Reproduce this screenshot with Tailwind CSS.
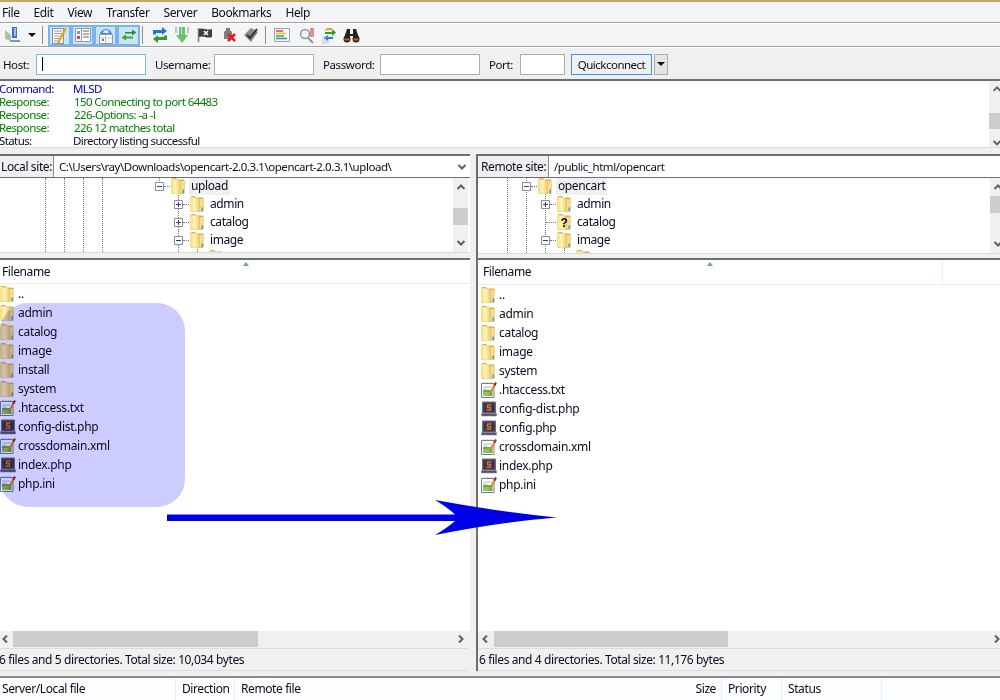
<!DOCTYPE html>
<html lang="en">
<head>
    <meta charset="UTF-8">
    <title>FileZilla</title>
    <script src="https://cdn.jsdelivr.net/npm/@tailwindcss/browser@4"></script>
</head>
<body class="bg-[#f0f0f0]">
<svg width="0" height="0" class="absolute">
    <defs>
        <linearGradient id="flap" x1="0" y1="0" x2="1" y2="0"><stop offset="0" stop-color="#f7dc80"/><stop offset=".5" stop-color="#fff4bc"/><stop offset="1" stop-color="#f2cf68"/></linearGradient>
        <symbol id="folder" viewBox="0 0 14 16">
            <path d="M1 0h4l1 1.500h6.500a1 1 0 0 1 1 1V15a1 1 0 0 1-1 1H1z" fill="#d9b14c"/>
            <path d="M0 .5 9 2.500V16L0 15.500z" fill="url(#flap)"/>
            <path d="M9.500 3h3.500v12.500H9.500z" fill="#f5dc8e"/>
            <path d="M11.500 11.500h1.500v3.500h-1.500z" fill="#3f9fe0"/>
        </symbol>
        <symbol id="txt" viewBox="0 0 16 16">
            <path d="M.5 1.500h12.500v14H.5z" fill="#fff" stroke="#6f7f8f"/>
            <path d="M2 1h9" stroke="#8a8a8a" stroke-dasharray="1 1"/>
            <path d="M2.500 5h8M2.500 7h4" stroke="#b5bcc4"/>
            <path d="M2 8h9.500v6H2z" fill="#5fae4a"/>
            <path d="M2 10h7v4H2z" fill="#8dc95f"/>
            <path d="M8 13 14.500 1.500" stroke="#d98b1f" stroke-width="2"/>
            <path d="M13.500 3.500 15 .5" stroke="#a8202a" stroke-width="2"/>
        </symbol>
        <symbol id="php" viewBox="0 0 16 16">
            <path d="M1.500 1h13v11h-13z" fill="#47475c" stroke="#6a6a80"/>
            <path d="M3 2.500h10v8H3z" fill="#34344a"/>
            <path d="M10.500 4H6.500v2.500h3V9h-4" fill="none" stroke="#e0702a" stroke-width="1.400"/>
            <path d="M.5 12.500h15V15H.5z" fill="#55556a" stroke="#8888a0" stroke-width=".6"/>
        </symbol>
        <symbol id="chev-up" viewBox="0 0 10 8"><path d="M1.500 6 5 2.500 8.500 6" fill="none" stroke="#606060" stroke-width="2"/></symbol>
        <symbol id="chev-down" viewBox="0 0 10 8"><path d="M1.500 2 5 5.500 8.500 2" fill="none" stroke="#606060" stroke-width="2"/></symbol>
        <symbol id="chev-left" viewBox="0 0 8 10"><path d="M6 1.500 2.500 5 6 8.500" fill="none" stroke="#606060" stroke-width="2"/></symbol>
        <symbol id="chev-right" viewBox="0 0 8 10"><path d="M2 1.500 5.500 5 2 8.500" fill="none" stroke="#606060" stroke-width="2"/></symbol>
        <symbol id="plus" viewBox="0 0 9 9"><path d="M.5.500h8v8h-8z" fill="#fff" stroke="#8a8f98"/><path d="M2 4.500h5M4.500 2v5" stroke="#2b3f7a"/></symbol>
        <symbol id="minus" viewBox="0 0 9 9"><path d="M.5.500h8v8h-8z" fill="#fff" stroke="#8a8f98"/><path d="M2 4.500h5" stroke="#2b3f7a"/></symbol>
    </defs>
</svg>

<div class="relative w-[1000px] h-[700px] overflow-hidden flex flex-col text-[12px] leading-none text-[#0b0b22] font-['Noto_Sans',sans-serif] tracking-[-0.4px]">
    <div class="h-[2px] shrink-0 bg-[#c9a45f]"></div>

    <!-- menu -->
    <div class="h-[21px] shrink-0 bg-[#f4f5f7] flex items-center gap-[14px] pl-[2px] pt-px border-b border-[#a3a3a3]">
        <span>File</span><span>Edit</span><span>View</span><span>Transfer</span><span>Server</span><span>Bookmarks</span><span>Help</span>
    </div>

    <!-- toolbar -->
    <div class="h-[24px] shrink-0 bg-[#f4f5f7] border-t border-white border-b border-b-[#a3a3a3] flex items-center">
        <svg class="ml-[5px] w-[16px] h-[18px]" viewBox="0 0 16 18"><path d="M0 4 6 9v6L0 13z" fill="#a9c79a"/><path d="M7 1h5v11H7z" fill="#3f74c4"/><path d="M9 2h2v8H9z" fill="#9cc0ea"/><path d="M5 14h10v2H5z" fill="#8793a3"/></svg>
        <span class="ml-[7px] w-0 h-0 border-x-[4px] border-x-transparent border-t-[4px] border-t-[#111]"></span>
        <span class="ml-[6px] w-px h-[18px] bg-[#8f8f8f]"></span>
        <div class="ml-[5px] flex">
            <span class="w-[23px] h-[21px] bg-[#cce4f7] border-2 border-[#7ab4ee] flex items-center justify-center">
                <svg class="w-[16px] h-[17px] shrink-0" viewBox="0 0 16 17"><path d="M.5 1.500h11v15H.5z" fill="#fff" stroke="#8c8c8c"/><path d="M2 4h8M2 6.500h8M2 9h7M2 11.500h6M2 14h4" stroke="#9a9a9a"/><path d="M6 16 14 1" stroke="#e3a21f" stroke-width="2.200"/></svg>
            </span>
            <span class="w-[23px] h-[21px] bg-[#cce4f7] border-2 border-[#7ab4ee] flex items-center justify-center">
                <svg class="w-[16px] h-[14px] shrink-0" viewBox="0 0 16 14"><path d="M.5.500h15v13H.5z" fill="#fff" stroke="#8f9aa8"/><path d="M6.500 1v12" stroke="#8f9aa8"/><path d="M2 3h3v3H2z" fill="#8a94c4"/><path d="M2 8h3v3H2z" fill="#d9434f"/><path d="M8 3h6M8 6h6M8 9h6" stroke="#8f9aa8" stroke-width="1.500"/></svg>
            </span>
            <span class="w-[23px] h-[21px] bg-[#cce4f7] border-2 border-[#7ab4ee] flex items-center justify-center">
                <svg class="w-[16px] h-[17px] shrink-0" viewBox="0 0 16 17"><path d="M2 8a6 6 0 0 1 12 0z" fill="#3f8ad8"/><path d="M5 6a3 3 0 0 1 6 0z" fill="#dcefff"/><path d="M1.500 7.500h13v9h-13z" fill="#fff" stroke="#8f9aa8"/><path d="M7.500 8v8M2 11h12" stroke="#b8c0ca"/><path d="M4 12h2v2H4z" fill="#d9434f"/></svg>
            </span>
            <span class="w-[23px] h-[21px] bg-[#cce4f7] border-2 border-[#7ab4ee] flex items-center justify-center">
                <svg class="w-[16px] h-[14px] shrink-0" viewBox="0 0 16 14"><path d="M4 4h7V1.500L15.500 4.500 11 7.500V5.500H4z" fill="#2e8b2e"/><path d="M12 8.500H5V6.500L.5 9.500 5 12.500V10.500h7z" fill="#35a835"/></svg>
            </span>
        </div>
        <span class="ml-[2px] w-px h-[18px] bg-[#8f8f8f]"></span>
        <svg class="ml-[9px] w-[16px] h-[16px]" viewBox="0 0 16 16"><path d="M1 7.500V3h9V0l5 4-5 4V6H4v1.500z" fill="#1f78d1"/><path d="M15 8.500V13H6v3l-5-4 5-4v2h6V8.500z" fill="#2ba02b"/></svg>
        <svg class="ml-[6px] w-[16px] h-[18px]" viewBox="0 0 16 18"><path d="M1 1h2v6H1zM13 1h2v6h-2z" fill="#b5c4d2"/><path d="M5 1h6v8h3l-6 8-6-8h3z" fill="#6cc06c"/><path d="M7 1h1v8H7z" fill="#bfe6bf"/></svg>
        <svg class="ml-[7px] w-[16px] h-[16px]" viewBox="0 0 16 16"><path d="M1.500 1v14" stroke="#777" stroke-width="1.500"/><path d="M2 2c4-2 8 2 13 0v8c-5 2-9-2-13 0z" fill="#3d3d3d"/><path d="M7 4l4 4M11 4 7 8" stroke="#fff" stroke-width="1.500"/></svg>
        <svg class="ml-[8px] w-[16px] h-[16px]" viewBox="0 0 16 16"><path d="M5 1h4v2l2 2v7H3V5l2-2z" fill="#7d7d7d"/><path d="M7 7l7 7M14 7l-7 7" stroke="#e31b1b" stroke-width="2.500"/></svg>
        <svg class="ml-[6px] w-[16px] h-[16px]" viewBox="0 0 16 16"><path d="M1 8 8 1l7 4-7 10z" fill="#8a8a8a"/><path d="M4 8l3 3 7-9" fill="none" stroke="#333" stroke-width="2"/></svg>
        <span class="ml-[6px] w-px h-[18px] bg-[#8f8f8f]"></span>
        <svg class="ml-[8px] w-[16px] h-[14px]" viewBox="0 0 16 14"><path d="M.5.500h15v13H.5z" fill="#f5f5f5" stroke="#9aa2ac"/><path d="M2 3h7" stroke="#e04040" stroke-width="1.500"/><path d="M2 5.500h10" stroke="#e8c020" stroke-width="1.500"/><path d="M2 8h8" stroke="#40a040" stroke-width="1.500"/><path d="M2 10.500h11" stroke="#4080d0" stroke-width="1.500"/></svg>
        <svg class="ml-[8px] w-[17px] h-[17px]" viewBox="0 0 17 17"><path d="M12 1h4v9h-4z" fill="#e98a8a"/><circle cx="7" cy="7" r="4.500" fill="#e8f1fa" stroke="#8a97a5" stroke-width="1.500"/><path d="M10 11l5 5" stroke="#8a97a5" stroke-width="2"/></svg>
        <svg class="ml-[6px] w-[16px] h-[17px]" viewBox="0 0 16 17"><path d="M1 9h7v8H1z" fill="#cfe1f5"/><path d="M4 5h7V2l4 3.500L11 9V7H4z" fill="#2ca02c"/><path d="M3 4l3-3h5v2H6z" fill="#e6a020"/><path d="M12 10H7v-2L3 11l4 3v-2h5z" fill="#3080d0"/></svg>
        <svg class="ml-[6px] w-[17px] h-[15px]" viewBox="0 0 17 15"><path d="M4 1h3v5h3V1h3l3 9H10V8H7v2H1z" fill="#222"/><circle cx="4" cy="11" r="3.500" fill="#222"/><circle cx="13" cy="11" r="3.500" fill="#222"/><path d="M1.500 11.500h5M10.500 11.500h5" stroke="#f0501e" stroke-width="2"/></svg>
    </div>

    <!-- quickconnect -->
    <div class="h-[34px] shrink-0 bg-[#f0f0f0] border-t border-white border-b-2 border-b-[#6e6e6e] flex items-center pt-px text-[11.500px]">
        <span class="ml-[3px] w-[33px] pt-px shrink-0">Host:</span>
        <div class="w-[110px] h-[21px] shrink-0 bg-white border border-[#7eb4ea] flex items-center pl-[5px]"><span class="w-px h-[14px] bg-black"></span></div>
        <span class="ml-[9px] w-[59px] pt-px shrink-0">Username:</span>
        <div class="w-[100px] h-[21px] shrink-0 bg-white border border-[#acacac]"></div>
        <span class="ml-[9px] w-[57px] pt-px shrink-0">Password:</span>
        <div class="w-[100px] h-[21px] shrink-0 bg-white border border-[#acacac]"></div>
        <span class="ml-[9px] w-[31px] pt-px shrink-0">Port:</span>
        <div class="w-[45px] h-[21px] shrink-0 bg-white border border-[#acacac]"></div>
        <div class="ml-[6px] w-[81px] h-[21px] pt-px shrink-0 bg-[#f0f0f0] border border-[#3399ff] flex items-center justify-center tracking-[-0.5px]">Quickconnect</div>
        <div class="ml-[2px] w-[14px] h-[21px] shrink-0 bg-[#e4e4e4] border border-[#acacac] flex items-start justify-center pt-[7px]"><span class="w-0 h-0 border-x-[4px] border-x-transparent border-t-[4px] border-t-[#111]"></span></div>
    </div>

    <!-- message log -->
    <div class="h-[67px] shrink-0 bg-white flex border-b border-[#dcdcdc]">
        <div class="w-[990px] shrink-0 pt-px -ml-px grid grid-cols-[74px_1fr] auto-rows-[13px] items-center text-[11.500px] tracking-[-0.6px]">
            <span class="text-[#0000a8]">Command:</span><span class="text-[#0000a8]">MLSD</span>
            <span class="text-[#008000]">Response:</span><span class="text-[#008000] pl-px">150 Connecting to port 64483</span>
            <span class="text-[#008000]">Response:</span><span class="text-[#008000] pl-px">226-Options: -a -l</span>
            <span class="text-[#008000]">Response:</span><span class="text-[#008000] pl-px">226 12 matches total</span>
            <span>Status:</span><span>Directory listing successful</span>
        </div>
        <div class="w-[16px] shrink-0 bg-[#f0f0f0] flex flex-col items-center relative">
            <svg class="mt-[4px] w-[10px] h-[8px]"><use href="#chev-up"/></svg>
            <div class="mt-[20px] w-full h-[17px] bg-[#cdcdcd]"></div>
            <svg class="mt-[10px] w-[10px] h-[8px]"><use href="#chev-down"/></svg>
        </div>
    </div>

    <div class="h-[6px] shrink-0 bg-[#f0f0f0]"></div>

    <!-- local and remote panes -->
    <div class="flex h-[517px] shrink-0">
        <section class="w-[470px] flex flex-col border-t-2 border-[#6e6e6e]">
            <div class="h-[22px] shrink-0 bg-white flex items-center border-b border-[#6e6e6e] whitespace-nowrap">
                <div class="w-[54px] h-full bg-[#f0f0f0] border-r border-[#8a8a8a] flex items-center pl-px pt-px">Local site:</div>
                <span class="ml-[5px] flex-1 pt-px text-[11.500px] tracking-[-0.45px]">C:\Users\ray\Downloads\opencart-2.0.3.1\opencart-2.0.3.1\upload\</span>
                <svg class="mr-[3px] w-[10px] h-[8px]"><use href="#chev-down"/></svg>
            </div>
            <div class="relative h-[74px] shrink-0 bg-white overflow-hidden flex">
                <span class="absolute left-[45px] top-0 h-full border-l border-dotted border-[#777]"></span>
                <span class="absolute left-[64px] top-0 h-full border-l border-dotted border-[#777]"></span>
                <span class="absolute left-[83px] top-0 h-full border-l border-dotted border-[#777]"></span>
                <span class="absolute left-[102px] top-0 h-full border-l border-dotted border-[#777]"></span>
                <span class="absolute left-[159px] top-0 h-[5px] border-l border-dotted border-[#777]"></span>
                <span class="absolute left-[178px] top-[13px] h-[61px] border-l border-dotted border-[#777]"></span>
                <span class="absolute left-[197px] top-[68px] h-[6px] border-l border-dotted border-[#777]"></span>
                <div class="relative flex-1 -mt-px">
                    <div class="h-[18px] flex items-center pl-[155px]"><svg class="w-[9px] h-[9px]"><use href="#minus"/></svg><span class="w-[6px] border-t border-dotted border-[#777]"></span><svg class="ml-px w-[14px] h-[16px]"><use href="#folder"/></svg><span class="ml-[4px] h-[18px] px-[2px] bg-[#f0f0f0] flex items-center">upload</span></div>
                    <div class="h-[18px] flex items-center pl-[174px]"><svg class="w-[9px] h-[9px]"><use href="#plus"/></svg><span class="w-[6px] border-t border-dotted border-[#777]"></span><svg class="ml-px w-[14px] h-[16px]"><use href="#folder"/></svg><span class="ml-[6px]">admin</span></div>
                    <div class="h-[18px] flex items-center pl-[174px]"><svg class="w-[9px] h-[9px]"><use href="#plus"/></svg><span class="w-[6px] border-t border-dotted border-[#777]"></span><svg class="ml-px w-[14px] h-[16px]"><use href="#folder"/></svg><span class="ml-[6px]">catalog</span></div>
                    <div class="h-[18px] flex items-center pl-[174px]"><svg class="w-[9px] h-[9px]"><use href="#minus"/></svg><span class="w-[6px] border-t border-dotted border-[#777]"></span><svg class="ml-px w-[14px] h-[16px]"><use href="#folder"/></svg><span class="ml-[6px]">image</span></div>
                    <div class="h-[18px] flex items-center pl-[209px]"><svg class="w-[14px] h-[16px]"><use href="#folder"/></svg></div>
                </div>
                <div class="w-[15px] mr-[2px] shrink-0 bg-[#f0f0f0] flex flex-col items-center">
                    <svg class="mt-[5px] w-[10px] h-[8px]"><use href="#chev-up"/></svg>
                    <div class="mt-[17px] w-full h-[17px] bg-[#cdcdcd]"></div>
                    <svg class="mt-[14px] w-[10px] h-[8px]"><use href="#chev-down"/></svg>
                </div>
            </div>
            <div class="h-[6px] shrink-0 bg-[#f0f0f0] border-t border-[#dcdcdc]"></div>
            <div class="h-[2px] shrink-0 bg-[#6e6e6e]"></div>
            <div class="relative h-[24px] shrink-0 bg-white border-b border-[#e4eff9] flex items-center pl-[2px]">Filename
                <span class="absolute left-[243px] top-[2px] w-0 h-0 border-x-[3px] border-x-transparent border-b-[4px] border-b-[#6a9fcf]"></span>
            </div>
            <div class="h-[347px] shrink-0 bg-white flex flex-col tracking-[-0.3px]">
                <div class="h-[19px] flex items-center"><svg class="w-[14px] h-[16px]"><use href="#folder"/></svg><span class="ml-[4px]">..</span></div>
                <div class="h-[19px] flex items-center"><svg class="w-[14px] h-[16px]"><use href="#folder"/></svg><span class="ml-[4px]">admin</span></div>
                <div class="h-[19px] flex items-center"><svg class="w-[14px] h-[16px]"><use href="#folder"/></svg><span class="ml-[4px]">catalog</span></div>
                <div class="h-[19px] flex items-center"><svg class="w-[14px] h-[16px]"><use href="#folder"/></svg><span class="ml-[4px]">image</span></div>
                <div class="h-[19px] flex items-center"><svg class="w-[14px] h-[16px]"><use href="#folder"/></svg><span class="ml-[4px]">install</span></div>
                <div class="h-[19px] flex items-center"><svg class="w-[14px] h-[16px]"><use href="#folder"/></svg><span class="ml-[4px]">system</span></div>
                <div class="h-[19px] flex items-center"><svg class="w-[16px] h-[16px]"><use href="#txt"/></svg><span class="ml-[2px]">.htaccess.txt</span></div>
                <div class="h-[19px] flex items-center"><svg class="w-[16px] h-[16px]"><use href="#php"/></svg><span class="ml-[2px]">config-dist.php</span></div>
                <div class="h-[19px] flex items-center"><svg class="w-[16px] h-[16px]"><use href="#txt"/></svg><span class="ml-[2px]">crossdomain.xml</span></div>
                <div class="h-[19px] flex items-center"><svg class="w-[16px] h-[16px]"><use href="#php"/></svg><span class="ml-[2px]">index.php</span></div>
                <div class="h-[19px] flex items-center"><svg class="w-[16px] h-[16px]"><use href="#txt"/></svg><span class="ml-[2px]">php.ini</span></div>
            </div>
            <div class="h-[16px] shrink-0 mr-[2px] bg-[#f0f0f0] flex items-center">
                <svg class="ml-px w-[8px] h-[10px]"><use href="#chev-left"/></svg>
                <div class="ml-[4px] w-[245px] h-full bg-[#cdcdcd]"></div>
                <svg class="ml-auto mr-[3px] w-[8px] h-[10px]"><use href="#chev-right"/></svg>
            </div>
            <div class="mr-[2px] mt-px h-[23px] shrink-0 bg-[#f0f0f0] border-y border-[#dcdcdc] flex items-center -ml-px">6 files and 5 directories. Total size: 10,034 bytes</div>
        </section>

        <section class="ml-[6px] w-[524px] flex flex-col border-t-2 border-l-2 border-[#6e6e6e] bg-[#f0f0f0]">
            <div class="h-[22px] shrink-0 bg-white flex items-center border-b border-[#6e6e6e] whitespace-nowrap">
                <div class="w-[71px] h-full bg-[#f0f0f0] border-r border-[#8a8a8a] flex items-center pl-[3px] pt-px">Remote site:</div>
                <span class="ml-[5px] flex-1 pt-px text-[11.500px] tracking-[-0.45px]">/public_html/opencart</span>
            </div>
            <div class="relative h-[75px] shrink-0 bg-white overflow-hidden flex">
                <span class="absolute left-[29px] top-0 h-full border-l border-dotted border-[#777]"></span>
                <span class="absolute left-[48px] top-0 h-full border-l border-dotted border-[#777]"></span>
                <span class="absolute left-[67px] top-[13px] h-[62px] border-l border-dotted border-[#777]"></span>
                <span class="absolute left-[86px] top-[69px] h-[6px] border-l border-dotted border-[#777]"></span>
                <div class="relative flex-1 -mt-px">
                    <div class="h-[18px] flex items-center pl-[44px]"><svg class="w-[9px] h-[9px]"><use href="#minus"/></svg><span class="w-[6px] border-t border-dotted border-[#777]"></span><svg class="ml-px w-[14px] h-[16px]"><use href="#folder"/></svg><span class="ml-[4px] h-[18px] px-[2px] bg-[#f0f0f0] flex items-center">opencart</span></div>
                    <div class="h-[18px] flex items-center pl-[63px]"><svg class="w-[9px] h-[9px]"><use href="#plus"/></svg><span class="w-[6px] border-t border-dotted border-[#777]"></span><svg class="ml-px w-[14px] h-[16px]"><use href="#folder"/></svg><span class="ml-[6px]">admin</span></div>
                    <div class="h-[18px] flex items-center pl-[68px]"><span class="w-[10px] border-t border-dotted border-[#777]"></span>
                        <svg class="ml-px w-[14px] h-[16px]" viewBox="0 0 14 16"><use href="#folder"/><text x="7" y="12.500" font-size="12" font-weight="700" text-anchor="middle" fill="#000" font-family="Liberation Sans">?</text></svg><span class="ml-[6px]">catalog</span></div>
                    <div class="h-[18px] flex items-center pl-[63px]"><svg class="w-[9px] h-[9px]"><use href="#minus"/></svg><span class="w-[6px] border-t border-dotted border-[#777]"></span><svg class="ml-px w-[14px] h-[16px]"><use href="#folder"/></svg><span class="ml-[6px]">image</span></div>
                    <div class="h-[18px] flex items-center pl-[98px]"><svg class="w-[14px] h-[16px]"><use href="#folder"/></svg></div>
                </div>
                <div class="w-[15px] -mr-[5px] shrink-0 bg-[#f0f0f0] flex flex-col items-center">
                    <svg class="mt-[5px] w-[10px] h-[8px]"><use href="#chev-up"/></svg>
                    <div class="mt-[5px] w-full h-[17px] bg-[#cdcdcd]"></div>
                    <svg class="mt-[27px] w-[10px] h-[8px]"><use href="#chev-down"/></svg>
                </div>
            </div>
            <div class="h-[5px] shrink-0 bg-[#f0f0f0] border-t border-[#dcdcdc]"></div>
            <div class="h-[2px] shrink-0 bg-[#6e6e6e]"></div>
            <div class="relative h-[25px] shrink-0 bg-white border-b border-[#e4eff9] flex items-center pl-[5px]">Filename
                <span class="absolute left-[229px] top-[2px] w-0 h-0 border-x-[3px] border-x-transparent border-b-[4px] border-b-[#6a9fcf]"></span>
                <span class="absolute left-[464px] top-0 h-full border-l border-[#e4eff9]"></span>
            </div>
            <div class="h-[346px] shrink-0 bg-white flex flex-col pl-[3px] tracking-[-0.3px]">
                <div class="h-[19px] flex items-center"><svg class="w-[14px] h-[16px]"><use href="#folder"/></svg><span class="ml-[4px]">..</span></div>
                <div class="h-[19px] flex items-center"><svg class="w-[14px] h-[16px]"><use href="#folder"/></svg><span class="ml-[4px]">admin</span></div>
                <div class="h-[19px] flex items-center"><svg class="w-[14px] h-[16px]"><use href="#folder"/></svg><span class="ml-[4px]">catalog</span></div>
                <div class="h-[19px] flex items-center"><svg class="w-[14px] h-[16px]"><use href="#folder"/></svg><span class="ml-[4px]">image</span></div>
                <div class="h-[19px] flex items-center"><svg class="w-[14px] h-[16px]"><use href="#folder"/></svg><span class="ml-[4px]">system</span></div>
                <div class="h-[19px] flex items-center"><svg class="w-[16px] h-[16px]"><use href="#txt"/></svg><span class="ml-[2px]">.htaccess.txt</span></div>
                <div class="h-[19px] flex items-center"><svg class="w-[16px] h-[16px]"><use href="#php"/></svg><span class="ml-[2px]">config-dist.php</span></div>
                <div class="h-[19px] flex items-center"><svg class="w-[16px] h-[16px]"><use href="#php"/></svg><span class="ml-[2px]">config.php</span></div>
                <div class="h-[19px] flex items-center"><svg class="w-[16px] h-[16px]"><use href="#txt"/></svg><span class="ml-[2px]">crossdomain.xml</span></div>
                <div class="h-[19px] flex items-center"><svg class="w-[16px] h-[16px]"><use href="#php"/></svg><span class="ml-[2px]">index.php</span></div>
                <div class="h-[19px] flex items-center"><svg class="w-[16px] h-[16px]"><use href="#txt"/></svg><span class="ml-[2px]">php.ini</span></div>
            </div>
            <div class="h-[16px] shrink-0 bg-[#f0f0f0] flex items-center">
                <svg class="ml-[3px] w-[8px] h-[10px]"><use href="#chev-left"/></svg>
                <div class="ml-[5px] w-[234px] h-full bg-[#cdcdcd]"></div>
                <svg class="ml-auto mr-[-1px] w-[8px] h-[10px]"><use href="#chev-right"/></svg>
            </div>
            <div class="mt-px h-[23px] shrink-0 bg-[#f0f0f0] border-y border-[#dcdcdc] flex items-center pl-px">6 files and 4 directories. Total size: 11,176 bytes</div>
        </section>
    </div>

    <div class="h-[5px] shrink-0 bg-[#f0f0f0]"></div>

    <!-- transfer queue -->
    <div class="h-[24px] shrink-0 bg-[#fcfdfe] border-t-2 border-[#8a8a8a] flex items-center">
        <div class="w-[176px] h-full pl-[2px] flex items-center border-r border-[#e4eff9]">Server/Local file</div>
        <div class="w-[59px] h-full pl-[6px] flex items-center border-r border-[#e4eff9]">Direction</div>
        <div class="w-[487px] h-full pl-[6px] pr-[5px] flex items-center justify-between border-r border-[#e4eff9]"><span>Remote file</span><span>Size</span></div>
        <div class="w-[60px] h-full pl-[6px] flex items-center border-r border-[#e4eff9]">Priority</div>
        <div class="w-[100px] h-full pl-[6px] flex items-center border-r border-[#e4eff9]">Status</div>
    </div>

    <!-- selection highlight and arrow drawn over the screenshot -->
    <div class="absolute left-0 top-[303px] w-[185px] h-[204px] rounded-[28px] bg-[#ccccff] mix-blend-multiply"></div>
    <svg class="absolute left-[160px] top-[495px] w-[400px] h-[45px]" viewBox="160 495 400 45">
        <path d="M167 514.500H455Q447 507 435 500Q500 512 557 517.500Q500 522 435 535Q447 528 455 521H167z" fill="#0000e6"/>
    </svg>
</div>
</body>
</html>
